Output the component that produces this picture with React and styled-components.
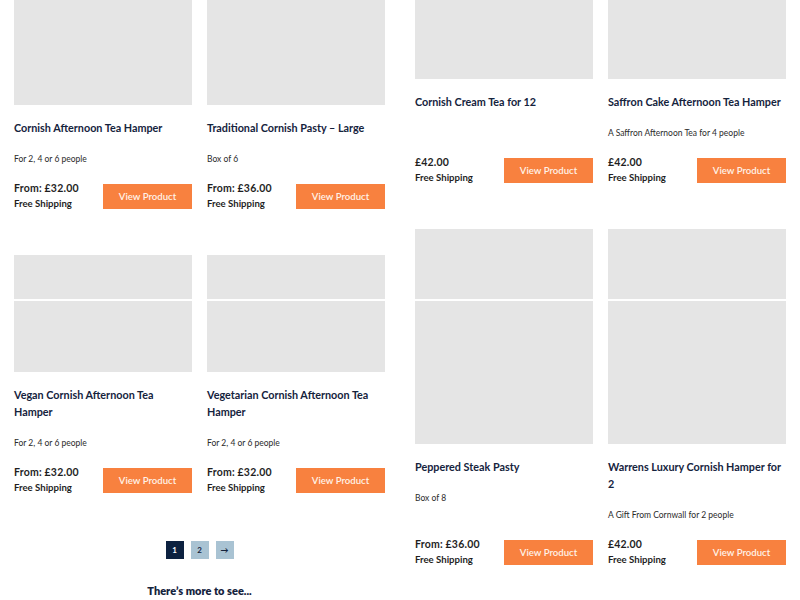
import React from "react";
import styled, { createGlobalStyle } from "styled-components";

const Global = createGlobalStyle`
  html, body { margin: 0; padding: 0; background: #ffffff; }
  body { overflow: hidden; font-family: "Lato", "Open Sans", sans-serif; }
  * { box-sizing: border-box; }
`;

const Page = styled.div`
  width: 800px;
  height: 600px;
  overflow: hidden;
  padding: 0 14px;
  display: grid;
  grid-template-columns: 1fr 1fr;
  column-gap: 30px;
  align-items: start;
`;

const Section = styled.section`
  display: flex;
  flex-direction: column;
  align-items: center;
`;

const ProductGrid = styled.div`
  width: 100%;
  display: grid;
  grid-template-columns: 1fr 1fr;
  column-gap: 15px;
  row-gap: 43px;
`;

const Card = styled.article`
  display: flex;
  flex-direction: column;
`;

const Thumb = styled.div`
  height: ${(p) => p.$h}px;
  background: ${(p) =>
    p.$seam != null
      ? `linear-gradient(to bottom, #e5e5e5 0, #e5e5e5 ${p.$seam}px, #ffffff ${p.$seam}px, #ffffff ${p.$seam + 2}px, #e5e5e5 ${p.$seam + 2}px)`
      : "#e5e5e5"};
`;

const Title = styled.h3`
  margin: 14px 0 0;
  padding-right: 3px;
  font-size: 10.8px;
  line-height: 17px;
  font-weight: 700;
  color: #15233d;
`;

const Desc = styled.p`
  margin: 17px 0 0;
  font-size: 8.5px;
  line-height: 12px;
  color: #2b2b2b;
`;

const Footer = styled.div`
  margin-top: auto;
  padding-top: 15px;
  display: flex;
  align-items: center;
  justify-content: space-between;
`;

const PriceBlock = styled.div`
  display: flex;
  flex-direction: column;
`;

const Price = styled.span`
  font-size: 10.5px;
  line-height: 16px;
  font-weight: 700;
  color: #1f1f1f;
  letter-spacing: 0.2px;
`;

const Shipping = styled.span`
  font-size: 9.6px;
  line-height: 16px;
  font-weight: 700;
  color: #1f1f1f;
`;

const ViewButton = styled.button`
  width: 89px;
  height: 25px;
  border: none;
  background: #f8813f;
  color: #fff2e8;
  font-family: inherit;
  font-size: 9.6px;
  font-weight: 600;
  padding: 0;
  cursor: pointer;
`;

const Pagination = styled.nav`
  margin-top: 45px;
  display: flex;
  gap: 7px;
`;

const PageBox = styled.span`
  width: 18px;
  height: 18px;
  display: flex;
  align-items: center;
  justify-content: center;
  font-size: 8px;
  font-weight: 700;
  background: ${(p) => (p.$active ? "#0d2240" : "#a9c3d3")};
  color: ${(p) => (p.$active ? "#ffffff" : "#15233d")};
`;

const More = styled.p`
  margin: 23px 0 0;
  font-size: 11px;
  line-height: 18px;
  font-weight: 800;
  color: #15233d;
`;

function Product({ p }) {
  return (
    <Card>
      <Thumb $h={p.h} $seam={p.seam} />
      <Title>{p.title}</Title>
      {p.desc && <Desc>{p.desc}</Desc>}
      <Footer>
        <PriceBlock>
          <Price>{p.price}</Price>
          <Shipping>Free Shipping</Shipping>
        </PriceBlock>
        <ViewButton>View Product</ViewButton>
      </Footer>
    </Card>
  );
}

const left = [
  { h: 105, title: "Cornish Afternoon Tea Hamper", desc: "For 2, 4 or 6 people", price: "From: £32.00" },
  { h: 105, title: "Traditional Cornish Pasty – Large", desc: "Box of 6", price: "From: £36.00" },
  { h: 117, seam: 44, title: "Vegan Cornish Afternoon Tea Hamper", desc: "For 2, 4 or 6 people", price: "From: £32.00" },
  { h: 117, seam: 44, title: "Vegetarian Cornish Afternoon Tea Hamper", desc: "For 2, 4 or 6 people", price: "From: £32.00" },
];

const right = [
  { h: 79, title: "Cornish Cream Tea for 12", price: "£42.00" },
  { h: 79, title: "Saffron Cake Afternoon Tea Hamper", desc: "A Saffron Afternoon Tea for 4 people", price: "£42.00" },
  { h: 215, seam: 70, title: "Peppered Steak Pasty", desc: "Box of 8", price: "From: £36.00" },
  { h: 215, seam: 70, title: "Warrens Luxury Cornish Hamper for 2", desc: "A Gift From Cornwall for 2 people", price: "£42.00" },
];

export default function App() {
  return (
    <>
      <Global />
      <Page>
        <Section>
          <ProductGrid>
            {left.map((p) => (
              <Product key={p.title} p={p} />
            ))}
          </ProductGrid>
          <Pagination>
            <PageBox $active>1</PageBox>
            <PageBox>2</PageBox>
            <PageBox>→</PageBox>
          </Pagination>
          <More>There’s more to see...</More>
        </Section>
        <Section>
          <ProductGrid>
            {right.map((p) => (
              <Product key={p.title} p={p} />
            ))}
          </ProductGrid>
        </Section>
      </Page>
    </>
  );
}
